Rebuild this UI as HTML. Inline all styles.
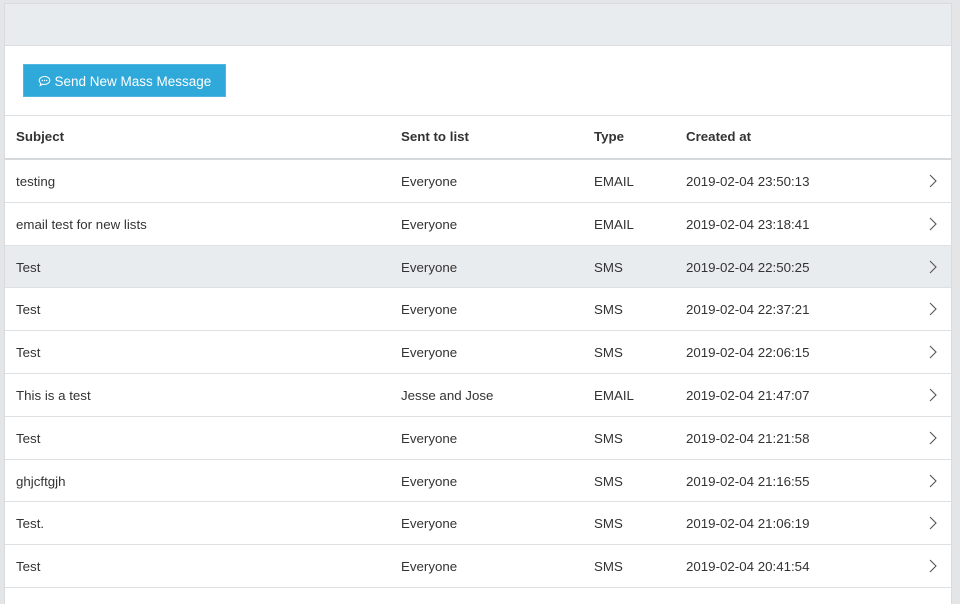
<!DOCTYPE html>
<html><head><style>
body{margin:0;background:#e3e5e7;font-family:"Liberation Sans",sans-serif;font-size:13.3px;color:#333;}
.p{position:absolute;left:4px;top:3px;width:946px;height:600px;background:#fff;border-left:1px solid #d9dcdf;border-right:1px solid #d9dcdf;border-top:1px solid #d9dcdf;}
.hd{height:41px;background:#e9ecef;border-bottom:1px solid #dcdfe2;}
.btn{position:absolute;left:18px;top:60px;width:203px;height:33px;background:#2ea9d9;color:#fff;font-size:13.5px;line-height:33px;text-align:center;box-sizing:border-box;border:1px solid #4fb8e0;}
.row{position:absolute;left:0;width:946px;height:42px;border-bottom:1px solid #dee1e4;}
.row span{position:absolute;top:0;line-height:42px;}
.th span{font-weight:bold;}
.c1{left:11px}.c2{left:396px}.c3{left:589px}.c4{left:681px}
.ch{position:absolute;left:923px;top:14px}
</style></head><body>
<div class="p">
<div class="hd"></div>
<div class="btn"><svg width="13" height="12" viewBox="0 0 13 12" style="vertical-align:-1px"><path d="M6.5 1.5C3.5 1.5 1.2 3.3 1.2 5.5c0 1.1.6 2.1 1.6 2.8L2.2 10.5l2.6-1.3c.5.1 1.1.2 1.7.2 3 0 5.3-1.8 5.3-4S9.5 1.5 6.5 1.5z" fill="none" stroke="#fff" stroke-width="1"/><circle cx="4.3" cy="5.5" r=".7" fill="#fff"/><circle cx="6.5" cy="5.5" r=".7" fill="#fff"/><circle cx="8.7" cy="5.5" r=".7" fill="#fff"/></svg> Send New Mass Message</div>
<div class="row th" style="top:111px;height:42px;border-top:1px solid #dee1e4;border-bottom:2px solid #d6d9dc"><span class="c1">Subject</span><span class="c2">Sent to list</span><span class="c3">Type</span><span class="c4">Created at</span></div>
</div>
<script>
var d=[["testing","Everyone","EMAIL","2019-02-04 23:50:13"],["email test for new lists","Everyone","EMAIL","2019-02-04 23:18:41"],["Test","Everyone","SMS","2019-02-04 22:50:25"],["Test","Everyone","SMS","2019-02-04 22:37:21"],["Test","Everyone","SMS","2019-02-04 22:06:15"],["This is a test","Jesse and Jose","EMAIL","2019-02-04 21:47:07"],["Test","Everyone","SMS","2019-02-04 21:21:58"],["ghjcftgjh","Everyone","SMS","2019-02-04 21:16:55"],["Test.","Everyone","SMS","2019-02-04 21:06:19"],["Test","Everyone","SMS","2019-02-04 20:41:54"]];
var h="";var p=document.querySelector('.p');
d.forEach(function(r,i){var t=156+i*42.8;h+='<div class="row" style="top:'+t+'px;height:41.8px;'+(i==2?'background:#e9ecef;':'')+'"><span class="c1" style="top:1px">'+r[0]+'</span><span class="c2" style="top:1px">'+r[1]+'</span><span class="c3" style="top:1px">'+r[2]+'</span><span class="c4" style="top:1px">'+r[3]+'</span><svg class="ch" width="10" height="14" viewBox="0 0 10 14"><path d="M2 1l6 6-6 6" fill="none" stroke="#555" stroke-width="1.1"/></svg></div>';});
p.insertAdjacentHTML('beforeend',h);
</script>
</body></html>
